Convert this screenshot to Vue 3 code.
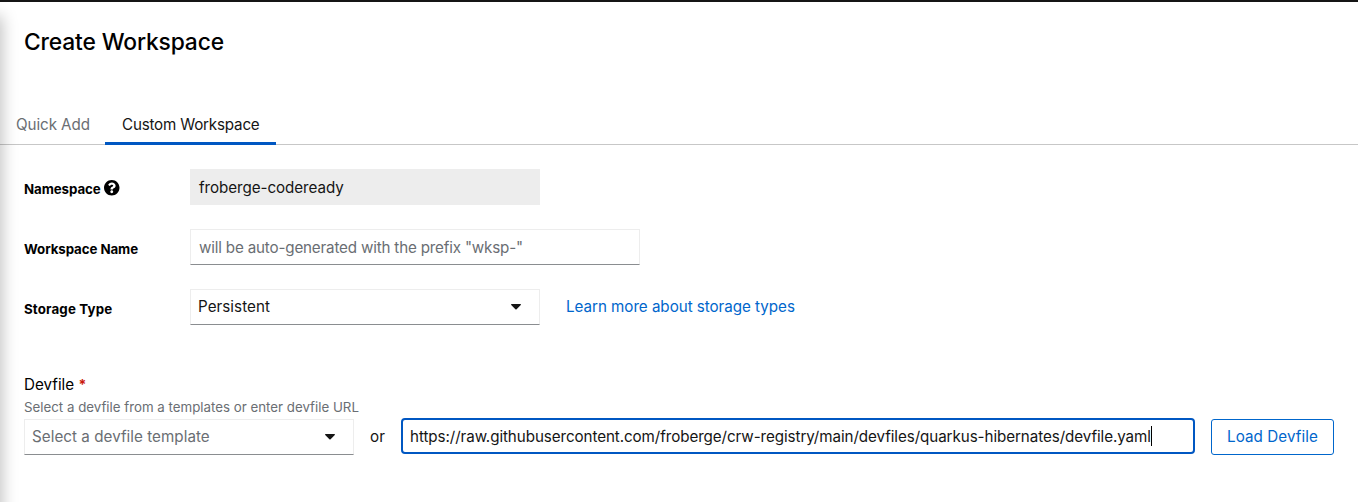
<script setup>
import { ref } from 'vue'
const url = ref('https://raw.githubusercontent.com/froberge/crw-registry/main/devfiles/quarkus-hibernates/devfile.yaml')
</script>

<template>
  <div class="page">
    <header class="masthead"></header>
    <div class="edge-shadow"></div>

    <h1 class="title">Create Workspace</h1>

    <nav class="tabs">
      <a class="tab quick">Quick Add</a>
      <a class="tab active">Custom Workspace</a>
    </nav>

    <form class="form" @submit.prevent>
      <div class="row">
        <div class="label">
          <span class="namespace">Namespace</span>
          <svg class="help" viewBox="8 8 496 496">
            <path fill="currentColor" d="M504 256c0 137-111 248-248 248S8 393 8 256 119 8 256 8s248 111 248 248zM262.700 90c-54.500 0-89.300 23-116.500 63.800-3.500 5.300-2.400 12.400 2.700 16.300l34.700 26.300c5.200 3.900 12.600 3 16.700-2.100 17.900-22.700 30.100-35.800 57.300-35.800 20.400 0 45.700 13.100 45.700 33 0 15-12.400 22.700-32.500 34C247.100 238.500 216 255 216 296v4c0 6.600 5.400 12 12 12h56c6.600 0 12-5.400 12-12v-1.300c0-28.700 84-29.900 84-107.700 0-58.600-60.700-101-117.300-101zM256 338c-25.400 0-46 20.600-46 46s20.600 46 46 46 46-20.600 46-46-20.600-46-46-46z" />
          </svg>
        </div>
        <div class="control readonly">froberge-codeready</div>
      </div>

      <div class="row">
        <div class="label wsname">Workspace Name</div>
        <div class="control name">will be auto-generated with the prefix "wksp-"</div>
      </div>

      <div class="row">
        <div class="label storage">Storage Type</div>
        <div class="control select">
          <span class="persistent">Persistent</span>
          <svg class="caret" viewBox="0 0 10 6"><path fill="#151515" d="M.7 0h8.600c.6 0 .9.7.5 1.100L5.600 5.300a.85.85 0 0 1-1.200 0L.2 1.100C-.2.7.1 0 .7 0z" /></svg>
        </div>
        <a class="link">Learn more about storage types</a>
      </div>
    </form>

    <section class="devfile">
      <div class="heading">Devfile <span class="required">*</span></div>
      <div class="hint">Select a devfile from a templates or enter devfile URL</div>
      <div class="source">
        <div class="control select template">
          <span>Select a devfile template</span>
          <svg class="caret" viewBox="0 0 10 6"><path fill="#151515" d="M.7 0h8.600c.6 0 .9.7.5 1.100L5.600 5.300a.85.85 0 0 1-1.200 0L.2 1.100C-.2.7.1 0 .7 0z" /></svg>
        </div>
        <span class="or">or</span>
        <div class="url"><span>{{ url }}</span><i class="cursor"></i></div>
        <button class="load" type="button">Load Devfile</button>
      </div>
    </section>
  </div>
</template>

<style scoped>
.page {
  position: relative;
  box-sizing: border-box;
  height: 502px;
  overflow: hidden;
  background: #fff;
  color: #151515;
  font: 400 15.2px/24px Inter, "Liberation Sans", sans-serif;
  font-feature-settings: "calt" 0;
}
.masthead { height: 2px; background: #151515; }
.edge-shadow {
  position: absolute;
  left: -16px;
  top: 18px;
  bottom: -30px;
  width: 16px;
  box-shadow: 0 0 16px 2px rgba(3, 3, 3, 0.25);
}
.title {
  margin: 25px 0 0 24px;
  font-size: 22.8px;
  line-height: 30px;
  font-weight: 500;
  letter-spacing: -0.14px;
  color: #000;
}
.tabs {
  display: flex;
  height: 40px;
  margin-top: 48px;
  box-sizing: border-box;
  border-bottom: 1px solid #c7c7c7;
}
.tab {
  box-sizing: border-box;
  height: 40px;
  padding-top: 8px;
}
.quick { width: 105px; padding-left: 16px; color: #6a6e73; letter-spacing: -0.08px; }
.active {
  width: 171px;
  padding-left: 17px;
  border-bottom: 3px solid #0057c2;
  letter-spacing: -0.2px;
}
.form { padding: 24px 0 0 24px; }
.row { display: flex; height: 36px; margin-bottom: 24px; }
.label {
  display: flex;
  width: 166px;
  padding-top: 8px;
  font-size: 13.3px;
  font-weight: 700;
  color: #000;
}
.label.storage { letter-spacing: 0.16px; }
.label.wsname { letter-spacing: -0.08px; }
.namespace { width: 80px; letter-spacing: -0.08px; }
.help { width: 15.5px; height: 15.5px; margin-top: 3px; }
.control {
  box-sizing: border-box;
  width: 350px;
  height: 36px;
  padding: 6px 8px 0;
  border: 1px solid #ededed;
  border-bottom-color: #8a8d90;
  white-space: nowrap;
}
.readonly { background: #ededed; border-color: #ededed; letter-spacing: -0.06px; }
.name { width: 450px; color: #6a6e73; letter-spacing: -0.18px; }
.select { display: flex; justify-content: space-between; padding: 5px 18px 0 7px; }
.persistent { letter-spacing: 0.04px; }
.caret { width: 10px; height: 6px; margin-top: 9px; }
.link { margin: 6px 0 0 26px; color: #0066cc; letter-spacing: -0.04px; }
.devfile { padding: 24px 24px 0; }
.heading { height: 24px; color: #000; }
.required { color: #c9190b; font-size: 14px; font-weight: 700; }
.hint { height: 22px; line-height: 20px; font-size: 13.3px; color: #6a6e73; }
.source { display: flex; }
.template { width: 330px; color: #6a6e73; letter-spacing: 0.04px; }
.or { width: 31px; padding: 6px 0 0 16px; letter-spacing: 0.2px; }
.url {
  display: flex;
  box-sizing: border-box;
  width: 794px;
  height: 36px;
  margin-top: -1px;
  padding: 5px 0 0 7px;
  border: 2px solid #0057c2;
  border-radius: 4px;
  letter-spacing: -0.08px;
  white-space: nowrap;
}
.cursor { width: 1px; height: 20px; margin-top: 1px; background: #000; }
.load {
  box-sizing: border-box;
  width: 123px;
  height: 36px;
  margin-left: 16px;
  padding: 0;
  border: 1px solid #0066cc;
  border-radius: 3px;
  background: #fff;
  color: #0066cc;
  font: inherit;
  letter-spacing: 0.08px;
}
</style>
